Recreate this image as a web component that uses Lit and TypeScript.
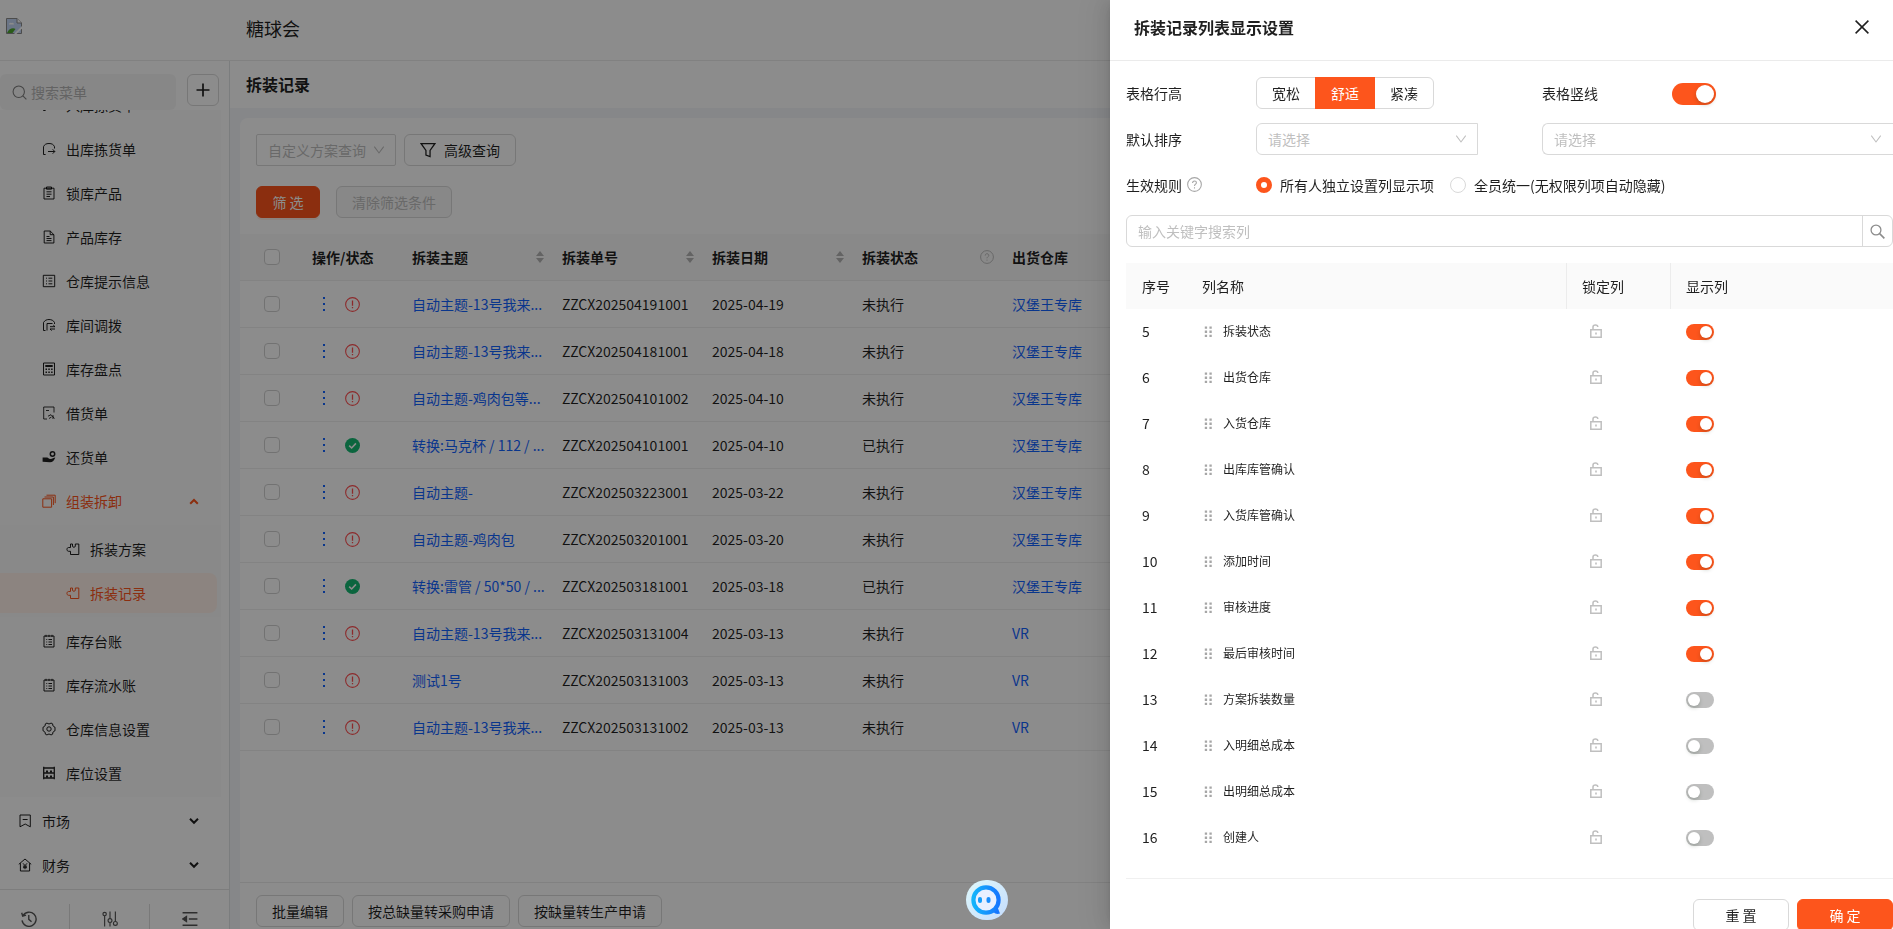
import { LitElement, html, svg, css, nothing } from "lit";
import { customElement, property, state } from "lit/decorators.js";
import { classMap } from "lit/directives/class-map.js";

/* Icon shapes on a 14 x 14 grid, stroked with the current text colour. */
const ICONS: Record<string, unknown> = {
  search: svg`<circle cx="6.3" cy="6.3" r="5.3"/><path d="M10.2 10.2 13.4 13.4"/>`,
  find: svg`<circle cx="5.6" cy="5.6" r="4.6" stroke-width="1.2"/><path d="M9 9 13.4 13.4" stroke-width="1.5"/>`,
  plus: svg`<path d="M7 .5V13.5M.5 7H13.5" stroke-width="1.7"/>`,
  close: svg`<path d="M.6.6 13.4 13.4M13.4.6.6 13.4" stroke-width="1.5"/>`,
  down: svg`<path d="M1.5 3 7 10.5 12.5 3" stroke-width="1.2"/>`,
  caretDown: svg`<path d="M3 4.800 7 8.800 11 4.800" stroke-width="2"/>`,
  caretUp: svg`<path d="M3.2 9.800 7 6 10.8 9.800" stroke-width="2"/>`,
  filter: svg`<path d="M1 1.500H13L8.800 7.400V12.800L5.200 11.400V7.400Z" stroke-width="1.1"/>`,
  help: svg`<circle cx="7" cy="7" r="6.400"/><path d="M5.200 5.600C5.200 3 8.800 3.200 8.800 5.400 8.800 6.700 7 6.700 7 8.300M7 9.600V10.700"/>`,
  warn: svg`<circle cx="7" cy="7" r="6.400"/><path d="M7 3.300V8.200M7 9.400V10.600" stroke-width="1.200"/>`,
  done: svg`<circle cx="7" cy="7" r="7" fill="currentColor" stroke="none"/><path d="M3.900 7.100 6.200 9.300 10.200 5" stroke="#fff" stroke-width="1.500"/>`,
  more: svg`<path d="M6 0H8V2H6ZM6 6H8V8H6ZM6 12H8V14H6Z" fill="currentColor" stroke="none"/>`,
  lock: svg`<path d="M1.800 5.800H12.200V13.200H1.800ZM4 5.500V3C4 .200 8.800 .200 8.800 3" stroke-width="1.500"/><path d="M6.200 8.500H7.800V10.500H6.200Z" fill="currentColor" stroke="none"/>`,
  grip: svg`<path d="M3 1.500H5.500V4H3ZM8 1.500H10.500V4H8ZM3 6H5.500V8.500H3ZM8 6H10.500V8.500H8ZM3 10.500H5.500V13H3ZM8 10.500H10.500V13H8Z" fill="currentColor" stroke="none"/>`,
  pick: svg`<path d="M3.600 12.500H1.500V4.700C2.500 2.500 4 1.500 7 1.500S11.500 2.500 12.500 4.700V6.500M6 9.500H12.700M10.700 7.300 12.800 9.500 10.700 11.700"/>`,
  clip: svg`<path d="M2 2.200H12V13H2ZM4.500 1H9.500V3.200H4.500ZM4.500 5.800H9.500M4.500 8.200H9.500M4.500 10.500H8"/>`,
  doc: svg`<path d="M8.200 1H2.200V13H11.900V4.700ZM8.200 1V4.700H11.900M4.500 6.500H7.500M4.500 8.500H9.500M4.500 10.600H9.500"/>`,
  list: svg`<path d="M1.300 1.300H12.700V12.700H1.300ZM4 4.200H5M6.500 4.200H10.300M4 7H5M6.500 7H10.300M4 9.800H5M6.500 9.800H10.300"/>`,
  transfer: svg`<path d="M3.500 12.500H1.500V4.500C2.800 2.400 4.500 1.500 7 1.500S11.500 2.500 12.500 4.500V6M5 12.500V5.500H10.500M8 8.700H13L11.300 7.200M13 11H8L9.700 12.600"/>`,
  calc: svg`<path d="M1.500 1H12.500V13H1.500Z"/><path d="M3.300 3H10.700V5H3.300ZM3.500 6.500H5V8H3.500ZM6.300 6.500H7.800V8H6.300ZM9.100 6.500H10.600V8H9.100ZM3.500 9.500H5V11H3.500ZM6.300 9.500H7.800V11H6.300ZM9.100 9.500H10.600V11H9.100Z" fill="currentColor" stroke="none"/>`,
  lend: svg`<path d="M5 13H1.700V1H12V6.500M4 4.500H7M6 10.200 9 8.700 12.500 12.500M7 12.500 9.500 11M11 9.200V13" stroke-width=".9"/>`,
  giveback: svg`<circle cx="10.500" cy="4" r="2.200" stroke-width="1.500"/><path d="M.6 7.600H5C6.500 7.600 6.500 9.200 8.500 9 10.500 8.700 11.500 7.500 13.300 7.400 12.500 10 10.500 12.300 8 12.300L.6 11.800Z" fill="currentColor" stroke="none"/>`,
  stack: svg`<path d="M.8 4.800H9.600V13.200H.8ZM2.500 3H11.400V11M4.500 1.200H13.200V9.200"/>`,
  puzzle: svg`<path d="M4.500 5.500V2H6.500V4.200C6.500 5.600 9.300 5.600 9.300 4.200V2H12.800V12.500H4.500V9.300H2.600C.4 9.300 .4 5.500 2.600 5.500Z"/>`,
  ledger: svg`<path d="M2 2H12V13H2ZM4 .8V3M7 .8V3M10 .8V3M4.300 5.500H5.200M6.500 5.500H10M4.300 8H5.200M6.500 8H10M4.300 10.500H5.200M6.500 10.500H10"/>`,
  gear: svg`<path d="M5 1C6.200 2.200 7.800 2.200 9 1L10.700 1.900C10.500 3.600 11.300 4.700 13 5.200V8.800C11.300 9.300 10.500 10.400 10.700 12.100L9 13C7.800 11.800 6.200 11.800 5 13L3.300 12.100C3.500 10.400 2.700 9.300 1 8.800V5.200C2.700 4.700 3.500 3.600 3.300 1.900Z"/><circle cx="7" cy="7" r="2.200"/>`,
  shelf: svg`<path d="M1.700.8V13.200M12.300.8V13.200M1.700 2H12.300M1.700 7H12.300M1.700 12H12.300" stroke-width="1.300"/><path d="M4 4.500H6V6.500H4ZM8 4.500H10V6.500H8ZM4 9.500H6V11.500H4ZM8 9.500H10V11.500H8Z" fill="currentColor" stroke="none"/>`,
  market: svg`<path d="M2 1H12.300V12.800L7.200 10 2 12.800ZM4.700 5.500H9.600"/>`,
  finance: svg`<path d="M.8 6.300 7 1 13.200 6.300M2.400 5.200V13H11.600V5.200M5 5.300 7 7.600 9 5.300M7 7.600V11.200M5 8.200H9M5 9.700H9"/>`,
  history: svg`<path d="M1.600 4.200A6.200 6.200 0 1 1 .9 8.200M.6 1.500 1.500 4.500 4.400 3.600M6.800 3.500V7.300L9.200 9.500" stroke-width="1.200"/>`,
  tune: svg`<path d="M2.300 4.400V13.500M7 .5V6.500M7 10.300V13.500M11.700.5V9"/><circle cx="2.300" cy="2.700" r="1.500"/><circle cx="7" cy="8.400" r="1.700"/><circle cx="11.700" cy="10.900" r="1.700"/>`,
  fold: svg`<path d="M.5 1.500H13.500M6 7H13.500M.5 12.500H13.500" stroke-width="1.300"/><path d="M.5 7 4 4.700V9.300Z" fill="currentColor"/>`,
};

@customElement("ui-icon")
export class UiIcon extends LitElement {
  @property() name = "";
  @property({ type: Number }) size = 14;

  static styles = css`
    :host { display: inline-flex; flex: none; }
    svg { display: block; fill: none; stroke: currentColor; stroke-width: 1; }
  `;

  render() {
    return html`<svg width=${this.size} height=${this.size} viewBox="0 0 14 14" aria-hidden="true">${ICONS[this.name]}</svg>`;
  }
}

const base = css`
  * { box-sizing: border-box; }
  button, input, select { font: inherit; color: inherit; margin: 0; }
  a { text-decoration: none; }
  .btn {
    height: 32px; min-width: 64px; padding: 0 15px; border: 1px solid #d9d9d9; border-radius: 6px;
    background: #fff; color: rgba(0, 0, 0, 0.88); white-space: nowrap;
    display: inline-flex; align-items: center; justify-content: center; gap: 8px;
  }
  .btn.primary { background: #fd551c; border-color: #fd551c; color: #fff; box-shadow: 0 2px 0 rgba(255, 90, 20, 0.1); }
  .btn:disabled { background: #f7f7f7; color: #bfbfbf; }
  .select { position: relative; display: flex; }
  .select select {
    appearance: none; width: 100%; height: 32px; padding: 0 24px 0 11px;
    border: 1px solid #d9d9d9; border-radius: 6px 0 0 6px; background: #fff; color: #bfbfbf;
  }
  .select ui-icon { position: absolute; right: 11px; top: 10px; color: #bfbfbf; pointer-events: none; }
`;

interface MenuItem { label: string; icon: string; level: number; open?: boolean; arrow?: string; active?: boolean }

const STOCK_TOP: MenuItem[] = [
  { label: "入库拣货单", icon: "pick", level: 1 },
  { label: "出库拣货单", icon: "pick", level: 1 },
  { label: "锁库产品", icon: "clip", level: 1 },
  { label: "产品库存", icon: "doc", level: 1 },
  { label: "仓库提示信息", icon: "list", level: 1 },
  { label: "库间调拨", icon: "transfer", level: 1 },
  { label: "库存盘点", icon: "calc", level: 1 },
  { label: "借货单", icon: "lend", level: 1 },
  { label: "还货单", icon: "giveback", level: 1 },
  { label: "组装拆卸", icon: "stack", level: 1, open: true, arrow: "caretUp" },
];
const ASSEMBLY: MenuItem[] = [
  { label: "拆装方案", icon: "puzzle", level: 2 },
  { label: "拆装记录", icon: "puzzle", level: 2, open: true, active: true },
];
const STOCK_BOTTOM: MenuItem[] = [
  { label: "库存台账", icon: "ledger", level: 1 },
  { label: "库存流水账", icon: "ledger", level: 1 },
  { label: "仓库信息设置", icon: "gear", level: 1 },
  { label: "库位设置", icon: "shelf", level: 1 },
];
const ROOT_ITEMS: MenuItem[] = [
  { label: "市场", icon: "market", level: 0, arrow: "caretDown" },
  { label: "财务", icon: "finance", level: 0, arrow: "caretDown" },
];

@customElement("side-menu")
export class SideMenu extends LitElement {
  static styles = [base, css`
    :host {
      display: flex; flex-direction: column; width: 230px; min-height: 0; overflow: hidden;
      background: #fff; border-right: 1px solid #e1e3e6;
    }
    .tools { display: flex; align-items: flex-start; gap: 11px; padding-top: 13px; }
    .search {
      display: flex; align-items: center; gap: 4px; width: 176px; height: 36px; padding: 0 12px;
      border-radius: 6px; background: #f6f6f6; color: #a0a0a0;
    }
    .search input { width: 100%; min-width: 0; border: 0; padding: 0; background: none; outline: none; }
    .search input::placeholder { color: #b4b4b4; opacity: 1; }
    .search ui-icon { color: #7d7d7d; }
    .add { width: 32px; min-width: 0; padding: 0; }
    nav {
      flex: 1; min-height: 0; overflow: hidden; display: flex; flex-direction: column;
      justify-content: flex-end; gap: 4px; padding-bottom: 4px;
    }
    .stock { display: flex; flex: none; flex-direction: column; gap: 4px; padding: 4px 0; margin-right: 8px; background: #fbfbfb; }
    .assembly { display: flex; flex-direction: column; gap: 4px; padding: 4px 0; background: #f9f9f9; }
    .item {
      display: flex; flex: none; align-items: center; gap: 10px; height: 40px; padding: 0 20px 0 18px;
      color: rgba(0, 0, 0, 0.88); border-radius: 0 8px 8px 0;
    }
    .l0 { margin-right: 8px; }
    .l1 { padding-left: 42px; }
    .l2 { padding-left: 66px; margin-right: 4px; }
    .item.open { color: #fd551c; }
    .item.active { background: #fff1e9; }
    .arrow { margin-left: auto; }
    .foot { display: flex; flex: none; justify-content: center; height: 40px; padding: 14px 11px 0 0; border-top: 1px solid #e4e4e4; }
    .foot button {
      flex: none; width: 80px; height: 30px; padding: 0; border: 0; background: none; color: #555;
      display: flex; align-items: center; justify-content: center;
    }
    .foot button + button { border-left: 1px solid #dcdcdc; }
  `];

  private item(m: MenuItem) {
    return html`<a href="#" class=${classMap({ item: true, ["l" + m.level]: true, open: !!m.open, active: !!m.active })}>
      <ui-icon name=${m.icon}></ui-icon><span>${m.label}</span>
      ${m.arrow ? html`<ui-icon class="arrow" name=${m.arrow}></ui-icon>` : nothing}
    </a>`;
  }

  render() {
    return html`
      <div class="tools">
        <label class="search"><ui-icon name="search" size="15"></ui-icon><input placeholder="搜索菜单" aria-label="搜索菜单" /></label>
        <button class="btn add" aria-label="新增"><ui-icon name="plus"></ui-icon></button>
      </div>
      <nav>
        <div class="stock">
          ${STOCK_TOP.map((m) => this.item(m))}
          <div class="assembly">${ASSEMBLY.map((m) => this.item(m))}</div>
          ${STOCK_BOTTOM.map((m) => this.item(m))}
        </div>
        ${ROOT_ITEMS.map((m) => this.item(m))}
      </nav>
      <div class="foot">
        <button aria-label="历史"><ui-icon name="history" size="16"></ui-icon></button>
        <button aria-label="设置"><ui-icon name="tune" size="16"></ui-icon></button>
        <button aria-label="收起"><ui-icon name="fold" size="16"></ui-icon></button>
      </div>`;
  }
}

interface RecordRow { subject: string; code: string; date: string; done?: boolean; depot: string }

const RECORDS: RecordRow[] = [
  { subject: "自动主题-13号我来...", code: "ZZCX202504191001", date: "2025-04-19", depot: "汉堡王专库" },
  { subject: "自动主题-13号我来...", code: "ZZCX202504181001", date: "2025-04-18", depot: "汉堡王专库" },
  { subject: "自动主题-鸡肉包等...", code: "ZZCX202504101002", date: "2025-04-10", depot: "汉堡王专库" },
  { subject: "转换:马克杯 / 112 / ...", code: "ZZCX202504101001", date: "2025-04-10", done: true, depot: "汉堡王专库" },
  { subject: "自动主题-", code: "ZZCX202503223001", date: "2025-03-22", depot: "汉堡王专库" },
  { subject: "自动主题-鸡肉包", code: "ZZCX202503201001", date: "2025-03-20", depot: "汉堡王专库" },
  { subject: "转换:雷管 / 50*50 / ...", code: "ZZCX202503181001", date: "2025-03-18", done: true, depot: "汉堡王专库" },
  { subject: "自动主题-13号我来...", code: "ZZCX202503131004", date: "2025-03-13", depot: "VR" },
  { subject: "测试1号", code: "ZZCX202503131003", date: "2025-03-13", depot: "VR" },
  { subject: "自动主题-13号我来...", code: "ZZCX202503131002", date: "2025-03-13", depot: "VR" },
];

@customElement("record-list")
export class RecordList extends LitElement {
  static styles = [base, css`
    :host { display: flex; flex-direction: column; min-width: 0; min-height: 0; background: #f4f6fa; }
    h1 { margin: 0; padding: 0 16px; background: #fff; font-size: 16px; font-weight: 600; line-height: 47px; }
    .card { display: flex; flex: 1; flex-direction: column; min-height: 0; margin: 10px 10px 0; background: #fff; border-radius: 8px 8px 0 0; }
    .row { display: flex; gap: 8px; padding: 16px 16px 0; }
    .row.actions { gap: 16px; padding: 20px 16px 16px; }
    .plan { width: 140px; }
    .plan select { border-radius: 2px; }
    table { width: 100%; table-layout: fixed; border-collapse: separate; border-spacing: 0; }
    th, td { height: 47px; padding: 0 8px; border-bottom: 1px solid #efefef; text-align: left; font-weight: 400; white-space: nowrap; }
    th { background: #fafafa; font-weight: 600; }
    .c-check { width: 64px; }
    .c-op { width: 100px; }
    .c-text { width: 150px; }
    .check { padding-left: 24px; }
    .check input {
      display: block; appearance: none; width: 16px; height: 16px;
      border: 1px solid #d0d0d0; border-radius: 4px; background: #fff;
    }
    .cell { display: flex; align-items: center; justify-content: space-between; height: 22px; }
    .split { box-shadow: 1px 0 0 #f0f0f0; margin-right: -8px; padding-right: 10px; }
    .sort { display: flex; flex-direction: column; gap: 2px; }
    .sort i { border: 4px solid transparent; border-top: 0; border-bottom: 5px solid #b4b4b4; }
    .sort i + i { border-bottom: 0; border-top: 5px solid #b4b4b4; }
    .hint { color: #bdbdbd; }
    .ops { display: flex; align-items: center; gap: 14px; padding-left: 5px; }
    .ops button { display: flex; padding: 0; border: 0; background: none; color: #1263ff; }
    .warn { color: #ff4d4f; }
    .done { color: #14b872; }
    td a { color: #1263ff; }
    .foot { display: flex; gap: 8px; margin-top: auto; padding: 12px 16px 2px; border-top: 1px solid #ececec; }
  `];

  private sortable(label: string) {
    return html`<th scope="col"><div class="cell split"><span>${label}</span><span class="sort"><i></i><i></i></span></div></th>`;
  }

  render() {
    return html`
      <h1>拆装记录</h1>
      <section class="card">
        <div class="row">
          <div class="select plan">
            <select aria-label="自定义方案查询"><option>自定义方案查询</option></select>
            <ui-icon name="down" size="12"></ui-icon>
          </div>
          <button class="btn"><ui-icon name="filter" size="16"></ui-icon>高级查询</button>
        </div>
        <div class="row actions">
          <button class="btn primary">筛 选</button>
          <button class="btn" disabled>清除筛选条件</button>
        </div>
        <table>
          <colgroup>
            <col class="c-check" /><col class="c-op" /><col class="c-text" /><col class="c-text" />
            <col class="c-text" /><col class="c-text" /><col />
          </colgroup>
          <thead>
            <tr>
              <th class="check"><input type="checkbox" aria-label="全选" /></th>
              <th scope="col"><div class="cell split">操作/状态</div></th>
              ${this.sortable("拆装主题")}${this.sortable("拆装单号")}${this.sortable("拆装日期")}
              <th scope="col"><div class="cell split"><span>拆装状态</span><ui-icon class="hint" name="help"></ui-icon></div></th>
              <th scope="col">出货仓库</th>
            </tr>
          </thead>
          <tbody>
            ${RECORDS.map((r) => html`<tr>
              <td class="check"><input type="checkbox" aria-label=${r.code} /></td>
              <td><div class="ops">
                <button aria-label="更多操作"><ui-icon name="more"></ui-icon></button>
                <ui-icon class=${r.done ? "done" : "warn"} name=${r.done ? "done" : "warn"} size="15"></ui-icon>
              </div></td>
              <td><a href="#">${r.subject}</a></td>
              <td>${r.code}</td>
              <td>${r.date}</td>
              <td>${r.done ? "已执行" : "未执行"}</td>
              <td><a href="#">${r.depot}</a></td>
            </tr>`)}
          </tbody>
        </table>
        <div class="foot">
          <button class="btn">批量编辑</button>
          <button class="btn">按总缺量转采购申请</button>
          <button class="btn">按缺量转生产申请</button>
        </div>
      </section>`;
  }
}

interface ColumnSetting { no: number; name: string; shown: boolean }

const COLUMN_NAMES = [
  "拆装状态", "出货仓库", "入货仓库", "出库库管确认", "入货库管确认", "添加时间",
  "审核进度", "最后审核时间", "方案拆装数量", "入明细总成本", "出明细总成本", "创建人",
];

@customElement("settings-drawer")
export class SettingsDrawer extends LitElement {
  @state() private columns: ColumnSetting[] = COLUMN_NAMES.map((name, i) => ({ no: i + 5, name, shown: i < 8 }));

  static styles = [base, css`
    :host {
      position: fixed; inset: 0 0 0 auto; width: 783px; max-width: 100%; overflow: hidden;
      display: flex; flex-direction: column; background: #fff;
      box-shadow: -6px 0 16px 0 rgba(0, 0, 0, 0.08), -3px 0 6px -4px rgba(0, 0, 0, 0.12), -9px 0 28px 8px rgba(0, 0, 0, 0.05);
    }
    header { display: flex; align-items: center; justify-content: space-between; padding: 15px 24px 21px; border-bottom: 1px solid #ebebeb; }
    h2 { margin: 0; font-size: 16px; font-weight: 600; line-height: 24px; }
    .close { display: flex; padding: 0; border: 0; background: none; }
    .body { flex: 1; min-height: 0; overflow: hidden; padding: 16px 0 0 16px; display: flex; flex-direction: column; }
    .form { display: grid; grid-template-columns: 130px 222px 64px 130px 1fr; align-items: center; row-gap: 14px; grid-auto-rows: 32px; margin-bottom: 14px; }
    .label { display: flex; align-items: center; gap: 5px; padding-bottom: 1px; }
    .label ui-icon { color: #a6a6a6; }
    .c4 { grid-column: 4; }
    .wide { grid-column: 4 / -1; }
    .wide select { border-right: 0; }
    .radios { grid-column: 2 / -1; display: flex; align-items: center; gap: 16px; }
    .radios label { display: flex; align-items: center; gap: 8px; }
    .radios input { appearance: none; width: 16px; height: 16px; border: 1px solid #d9d9d9; border-radius: 50%; }
    .radios input:checked { border: 5px solid #fd551c; }
    .segment { display: flex; }
    .segment label {
      height: 32px; padding: 0 15px; line-height: 30px; border: 1px solid #d9d9d9; margin-right: -1px;
    }
    .segment label:first-child { border-radius: 6px 0 0 6px; }
    .segment label:last-child { border-radius: 0 6px 6px 0; }
    .segment label:has(input:checked) { position: relative; background: #fd551c; border-color: #fd551c; color: #fff; }
    .segment input { position: absolute; opacity: 0; width: 1px; height: 1px; }
    .switch {
      appearance: none; display: block; width: 28px; height: 16px; padding: 2px; border-radius: 16px; background: #bfbfbf;
    }
    .switch::before {
      content: ""; display: block; width: 12px; height: 12px; border-radius: 50%; background: #fff;
      box-shadow: 0 2px 4px rgba(0, 35, 11, 0.2);
    }
    .switch:checked { background: #fd551c; }
    .switch:checked::before { margin-left: auto; }
    .switch.large { width: 44px; height: 22px; margin-top: 2px; }
    .switch.large::before { width: 18px; height: 18px; }
    .find { display: flex; flex: none; height: 32px; border: 1px solid #d9d9d9; border-radius: 6px; }
    .find input { flex: 1; min-width: 0; border: 0; padding: 0 11px; background: none; outline: none; }
    .find input::placeholder { color: #bfbfbf; opacity: 1; }
    .find button { display: flex; align-items: center; justify-content: center; width: 30px; padding: 0; border: 0; border-left: 1px solid #d9d9d9; background: none; color: #8c8c8c; }
    table { width: 100%; margin-top: 16px; table-layout: fixed; border-collapse: separate; border-spacing: 0; }
    th, td { height: 46px; padding: 0 16px; text-align: left; font-weight: 400; }
    td { padding-bottom: 2px; }
    td:last-child { padding-bottom: 0; }
    th { background: #fafafa; }
    th.line { border-left: 1px solid #ececec; padding-left: 15px; }
    .c-no { width: 60px; }
    .c-name { width: 380px; }
    .c-lock { width: 104px; }
    .name { display: flex; align-items: center; gap: 8px; font-size: 12px; }
    .name ui-icon { color: #a6a6a6; }
    .lock { display: flex; margin-left: 7px; padding: 0; border: 0; background: none; color: #bfbfbf; }
    footer { display: flex; flex: none; justify-content: flex-end; gap: 8px; margin: 0 0 -2px 16px; padding-top: 20px; border-top: 1px solid #f0f0f0; }
    footer .btn { width: 96px; }
  `];

  private toggle(no: number) {
    this.columns = this.columns.map((c) => (c.no === no ? { ...c, shown: !c.shown } : c));
  }

  render() {
    return html`
      <header><h2>拆装记录列表显示设置</h2><button class="close" aria-label="关闭"><ui-icon name="close"></ui-icon></button></header>
      <div class="body">
        <div class="form">
          <span class="label">表格行高</span>
          <div class="segment" role="radiogroup" aria-label="表格行高">
            <label><input type="radio" name="density" />宽松</label>
            <label><input type="radio" name="density" checked />舒适</label>
            <label><input type="radio" name="density" />紧凑</label>
          </div>
          <label class="label c4" for="lines">表格竖线</label>
          <input id="lines" class="switch large" type="checkbox" role="switch" checked />
          <label class="label" for="sort">默认排序</label>
          <div class="select"><select id="sort"><option>请选择</option></select><ui-icon name="down" size="12"></ui-icon></div>
          <div class="select wide"><select aria-label="排序方式"><option>请选择</option></select><ui-icon name="down" size="12"></ui-icon></div>
          <span class="label">生效规则<ui-icon name="help" size="15"></ui-icon></span>
          <div class="radios">
            <label><input type="radio" name="rule" checked />所有人独立设置列显示项</label>
            <label><input type="radio" name="rule" />全员统一(无权限列项自动隐藏)</label>
          </div>
        </div>
        <div class="find">
          <input placeholder="输入关键字搜索列" aria-label="输入关键字搜索列" />
          <button aria-label="搜索"><ui-icon name="find" size="15"></ui-icon></button>
        </div>
        <table>
          <colgroup><col class="c-no" /><col class="c-name" /><col class="c-lock" /><col /></colgroup>
          <thead><tr>
            <th scope="col">序号</th><th scope="col">列名称</th>
            <th scope="col" class="line">锁定列</th><th scope="col" class="line">显示列</th>
          </tr></thead>
          <tbody>
            ${this.columns.map((c) => html`<tr>
              <td>${c.no}</td>
              <td><div class="name"><ui-icon name="grip" size="13"></ui-icon>${c.name}</div></td>
              <td><button class="lock" aria-label="锁定${c.name}"><ui-icon name="lock"></ui-icon></button></td>
              <td><input class="switch" type="checkbox" role="switch" aria-label="显示${c.name}" .checked=${c.shown} @change=${() => this.toggle(c.no)} /></td>
            </tr>`)}
          </tbody>
        </table>
      </div>
      <footer><button class="btn">重 置</button><button class="btn primary">确 定</button></footer>`;
  }
}

@customElement("app-root")
export class AppRoot extends LitElement {
  static styles = [base, css`
    :host {
      display: grid; grid-template: 61px minmax(0, 1fr) / 230px minmax(0, 1fr); height: 100vh; overflow: hidden;
      background: #fff; color: rgba(0, 0, 0, 0.88);
      font: 14px/22px "Noto Sans CJK SC", "Microsoft YaHei", sans-serif;
    }
    .top { grid-column: 1 / -1; display: grid; grid-template-columns: 246px 1fr; border-bottom: 1px solid #ebebeb; }
    .logo { display: block; margin: 18px 0 0 6px; }
    .company { font-size: 18px; line-height: 56px; }
    .mask { position: fixed; inset: 0; background: rgba(0, 0, 0, 0.45); }
    .chat { position: fixed; left: 966px; bottom: 9px; padding: 0; border: 0; background: none; display: flex; }
  `];

  render() {
    return html`
      <div class="top">
        <svg class="logo" width="16" height="16" viewBox="0 0 16 16" role="img" aria-label="logo">
          <path d="M.5.5H11L15.500 5V15.500H.5Z" fill="#c3d5f5" stroke="#8a8a8a" />
          <path d="M11 .5V5H15.500" fill="#fff" stroke="#8a8a8a" />
          <path d="M3 6.500A1.700 1.700 0 0 1 5.500 5 1.800 1.800 0 0 1 8 6.500Z" fill="#fff" />
          <path d="M1 15C3 10.500 7 9.500 9.500 11L6.500 15Z" fill="#4ea62f" />
          <path d="M8 16 16 8V10.500L10.500 16Z" fill="#fff" />
        </svg>
        <span class="company">糖球会</span>
      </div>
      <side-menu></side-menu>
      <record-list></record-list>
      <div class="mask"></div>
      <button class="chat" aria-label="在线客服">
        <svg width="42" height="40" viewBox="0 0 42 40">
          <defs>
            <linearGradient id="ring" x1="0" x2="1"><stop offset="0" stop-color="#14b4fb" /><stop offset="1" stop-color="#1677ff" /></linearGradient>
            <linearGradient id="disc" x1="0" x2="1" y2="1"><stop offset="0" stop-color="#dff8fb" /><stop offset="1" stop-color="#c4dcfd" /></linearGradient>
          </defs>
          <rect width="42" height="40" rx="20" fill="url(#disc)" />
          <path d="M31 26 34 33.500C31.500 34.500 29 34 27.500 32Z" fill="#1677ff" />
          <circle cx="20" cy="20" r="12.600" fill="#e9f0ff" stroke="url(#ring)" stroke-width="4.200" />
          <rect x="12" y="17" width="4" height="6" rx="2" fill="#159dfb" />
          <rect x="20.500" y="17" width="4" height="6" rx="2" fill="#1a8dfb" />
        </svg>
      </button>
      <settings-drawer></settings-drawer>`;
  }
}
